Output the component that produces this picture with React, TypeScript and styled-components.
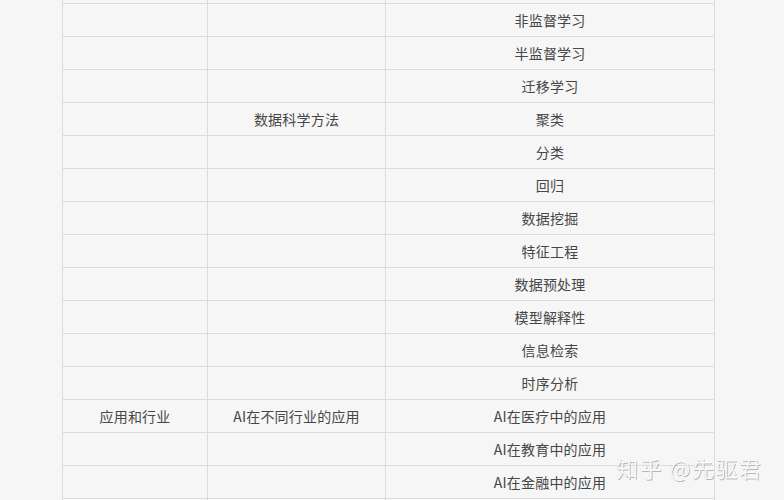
import React from "react";
import styled, { createGlobalStyle } from "styled-components";

const Global = createGlobalStyle`
  html, body {
    margin: 0;
    padding: 0;
    background: #f6f6f6;
    overflow: hidden;
  }
  body {
    font-family: "Noto Sans CJK SC", "Noto Sans", sans-serif;
  }
`;

const Page = styled.div`
  position: relative;
  width: 784px;
  height: 500px;
  overflow: hidden;
  background: #f6f6f6;
  padding-left: 62px;
  box-sizing: border-box;
`;

const Grid = styled.div`
  display: grid;
  grid-template-columns: 144px 177px 328px;
  grid-auto-rows: 32px;
  gap: 1px;
  padding: 1px;
  width: max-content;
  margin-top: -30px;
  background: #dcdcdc;
`;

const Cell = styled.div`
  background: #f6f6f6;
  display: flex;
  align-items: center;
  justify-content: center;
  font-size: 14px;
  color: #474747;
  letter-spacing: 0.2px;
  white-space: nowrap;
`;

const Watermark = styled.div`
  position: absolute;
  left: 616px;
  top: 451px;
  font-size: 22px;
  font-family: "Noto Sans CJK SC", sans-serif;
  color: rgba(255, 255, 255, 0.92);
  text-shadow: 1px 1px 0 rgba(0, 0, 0, 0.26), -0.5px -0.5px 0 rgba(0, 0, 0, 0.12);
  letter-spacing: 1.5px;
  white-space: pre;
`;

const rows: [string, string, string][] = [
  ["", "", ""],
  ["", "", "非监督学习"],
  ["", "", "半监督学习"],
  ["", "", "迁移学习"],
  ["", "数据科学方法", "聚类"],
  ["", "", "分类"],
  ["", "", "回归"],
  ["", "", "数据挖掘"],
  ["", "", "特征工程"],
  ["", "", "数据预处理"],
  ["", "", "模型解释性"],
  ["", "", "信息检索"],
  ["", "", "时序分析"],
  ["应用和行业", "AI在不同行业的应用", "AI在医疗中的应用"],
  ["", "", "AI在教育中的应用"],
  ["", "", "AI在金融中的应用"],
  ["", "", ""],
];

export default function App() {
  return (
    <Page>
      <Global />
      <Grid>
        {rows.map((r, i) =>
          r.map((t, j) => <Cell key={`${i}-${j}`}>{t}</Cell>)
        )}
      </Grid>
      <Watermark>知乎 @先驱君</Watermark>
    </Page>
  );
}
